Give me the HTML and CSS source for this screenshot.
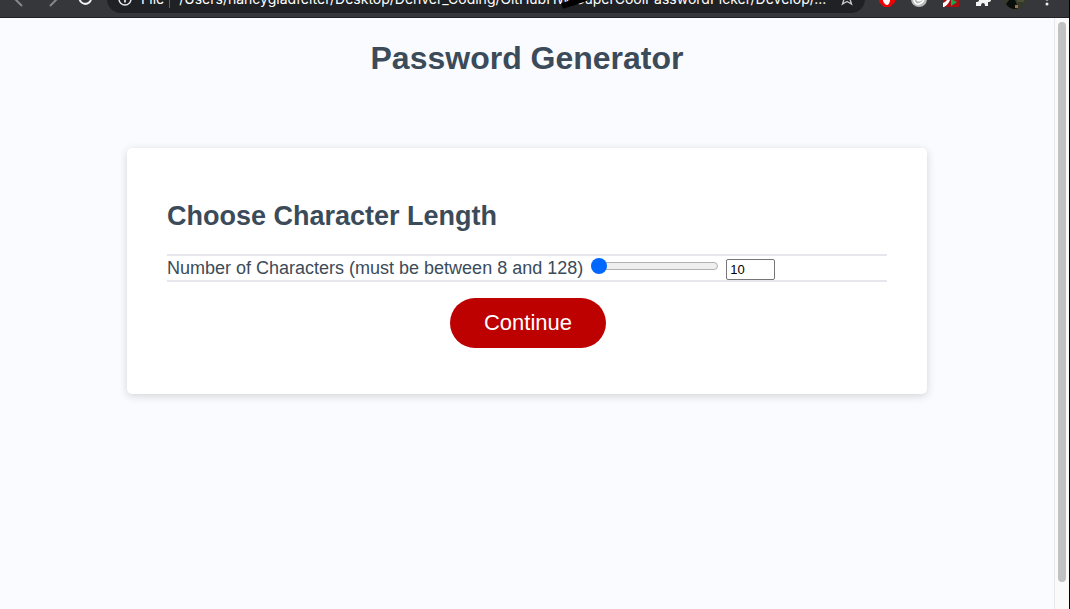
FILE: index.html
```html
<!DOCTYPE html>
<html lang="en">
<head>
  <meta charset="utf-8">
  <title>Password Generator</title>
  <link rel="stylesheet" href="styles.css">
</head>
<body>
  <div class="window">
    <header class="browser-bar">
      <div class="toolbar">
        <button class="tool back" aria-label="Back"><svg width="20" height="20" viewBox="0 0 20 20"><path d="M13 1 L4 8 L13 17" fill="none" stroke="#87888b" stroke-width="2"/></svg></button>
        <button class="tool forward" aria-label="Forward"><svg width="20" height="20" viewBox="0 0 20 20"><path d="M7 17 L16 8 L7 1" fill="none" stroke="#87888b" stroke-width="2"/></svg></button>
        <button class="tool reload" aria-label="Reload"><svg width="20" height="20" viewBox="0 0 20 20"><path d="M15 5 A6 6 0 1 0 16 11" fill="none" stroke="#f1f1f1" stroke-width="2"/><path d="M17 2v6h-6z" fill="#f1f1f1"/></svg></button>
        <div class="address">
          <svg class="info" width="16" height="16" viewBox="0 0 16 16"><circle cx="8" cy="8" r="6" fill="none" stroke="#e8eaed" stroke-width="1.500"/><path d="M8 7v4.500M8 4v1.500" stroke="#e8eaed" stroke-width="1.700"/></svg>
          <span class="scheme">File</span>
          <span class="path">/Users/nancygladfelter/Desktop/Denver_Coding/GitHubHW/SuperCoolPasswordPicker/Develop/...</span>
          <svg class="mark" width="36" height="16" viewBox="0 0 36 16"><path d="M1 13 L14 9 L25 5" fill="none" stroke="#000" stroke-width="6"/></svg>
          <svg class="star" width="16" height="16" viewBox="0 0 16 16"><path d="M8 0.500 L9.800 4.800 L14.500 5.200 L11 8.300 L12.500 13 L8 10.500 L3.500 13 L5 8.300 L1.500 5.200 L6.200 4.800Z" fill="none" stroke="#c4c7ca" stroke-width="1.400"/></svg>
        </div>
        <div class="extensions">
          <svg width="16" height="16" viewBox="0 0 16 16"><path d="M5 0h6l5 5v6l-5 5H5l-5-5V5z" fill="#f00000"/><path d="M4 3h7v7q-1 4-3 4t-4-4z" fill="#fff"/></svg>
          <svg width="16" height="16" viewBox="0 0 16 16"><circle cx="8" cy="8" r="8" fill="#b9b9b9"/><path d="M3 7v2q1 5 5 4 4-1 5-5" fill="none" stroke="#fff" stroke-width="1.500"/><path d="M6 8q1 3 5 0" fill="none" stroke="#fff" stroke-width="2"/></svg>
          <svg width="16" height="16" viewBox="0 0 16 16"><path d="M0 0h16v16H0z" fill="#a80d12"/><path d="M0 12Q5 10 7 3v6Q5 14 1 16H0z" fill="#fff"/><path d="M8 8l6 3-6 4z" fill="#19a652"/></svg>
          <svg width="16" height="16" viewBox="0 0 16 16"><path d="M3 3h3q0-3 2-3t2 3h4v4q2 0 2 2t-3 2v4h-3q0-3-2-3t-2 3H1v-4q3 0 3-2T1 7z" fill="#f4f4f4"/></svg>
          <svg class="avatar" width="22" height="22" viewBox="0 0 22 22"><circle cx="11" cy="11" r="11" fill="#343a2b"/><path d="M2 16q4-5 6-8l3 4 3 8q-7 3-12-4z" fill="#090d0b"/><path d="M11 17h3v3h-3z" fill="#9b7344"/><path d="M13 13h7" stroke="#65673e" stroke-width="1"/></svg>
          <svg class="more" width="4" height="16" viewBox="0 0 4 16"><circle cx="2" cy="2" r="1.500" fill="#f1f1f1"/><circle cx="2" cy="8" r="1.500" fill="#f1f1f1"/><circle cx="2" cy="13" r="1.500" fill="#f1f1f1"/></svg>
        </div>
      </div>
    </header>
    <div class="viewport">
      <main class="page">
        <h1 class="title">Password Generator</h1>
        <form class="card">
          <h2 class="card-title">Choose Character Length</h2>
          <div class="length-row">
            <label class="length-label" for="range">Number of Characters (must be between 8 and 128)</label>
            <input class="length-range" id="range" type="range" min="8" max="128" value="10">
            <input class="length-number" type="text" inputmode="numeric" value="10" aria-label="Number of characters">
          </div>
          <div class="card-footer"><button class="continue" type="button">Continue</button></div>
        </form>
      </main>
      <div class="scrollbar"><div class="thumb"></div></div>
    </div>
  </div>
</body>
</html>
```
FILE: styles.css
```css
* { box-sizing: border-box; }

body {
  margin: 0;
  background: #fafbff;
  color: #3b4b59;
  font-family: "Liberation Sans", Arial, sans-serif;
}

.window {
  display: flex;
  flex-direction: column;
  min-height: 100vh;
  border-right: 1px solid #000;
}

.browser-bar {
  display: flex;
  align-items: flex-end;
  height: 18px;
  overflow: hidden;
  background: #36373b;
  border-bottom: 1px solid #202124;
}

.toolbar {
  display: flex;
  flex: 1;
  align-items: center;
  min-width: 0;
  padding: 0 20px 4px 9px;
}

.tool {
  display: flex;
  padding: 0;
  border: 0;
  background: none;
}

.forward { margin-left: 14px; }
.reload { margin-left: 12px; }

.address {
  display: flex;
  flex: 1;
  align-items: center;
  position: relative;
  min-width: 0;
  height: 28px;
  margin-left: 12px;
  padding: 0 10px;
  border-radius: 14px;
  background: #202124;
  color: #fff;
  font: 14px/18px Inter, sans-serif;
}

.info, .star { flex: none; }

.scheme {
  margin-left: 8px;
  padding-right: 5px;
  border-right: 1px solid #5f6368;
}

.path {
  flex: 1;
  min-width: 0;
  margin-left: 9px;
  overflow: hidden;
  white-space: nowrap;
}

.mark {
  position: absolute;
  left: 454px;
  bottom: 4px;
}

.extensions {
  display: flex;
  flex: none;
  align-items: center;
  gap: 16px;
  margin-left: 14px;
}

.avatar { margin-left: -3px; }
.more { margin-left: 3px; }

.viewport {
  display: flex;
  flex: 1;
}

.page {
  flex: 1;
  min-width: 0;
}

.title {
  margin: 21px 0 71px;
  font-size: 32px;
  line-height: 38px;
  text-align: center;
}

.card {
  max-width: 800px;
  margin: 0 auto;
  padding: 50px 40px 46px;
  border-radius: 5px;
  background: #fff;
  box-shadow: 0 2px 8px rgba(0, 0, 0, 0.16);
}

.card-title {
  margin: 0 0 20px;
  font-size: 27px;
  line-height: 36px;
}

.length-row {
  display: flex;
  align-items: center;
  border-top: 2px solid #e7e6ec;
  border-bottom: 2px solid #e7e6ec;
  font-size: 18px;
  line-height: 24px;
}

.length-range {
  appearance: none;
  width: 127px;
  height: 16px;
  margin: 0 0 4px 8px;
  background: none;
}

.length-range::-webkit-slider-runnable-track {
  height: 8px;
  border: 1px solid #b2b2b2;
  border-radius: 4px;
  background: #efefef;
}

.length-range::-webkit-slider-thumb {
  appearance: none;
  width: 16px;
  height: 16px;
  margin: -5px 0 0 -3px;
  border-radius: 50%;
  background: #0068ff;
}

.length-number {
  align-self: flex-end;
  width: 49px;
  height: 21px;
  margin: 0 0 0 8px;
  padding: 1px 3px;
  border: 1px solid #767676;
  border-radius: 2px;
  background: #fff;
  color: #000;
  font: 13px "Liberation Sans", Arial, sans-serif;
}

.card-footer {
  display: flex;
  justify-content: center;
  margin-top: 16px;
  padding-left: 2px;
}

.continue {
  padding: 12px 34px;
  border: 0;
  border-radius: 25px;
  background: #bd0000;
  color: #fff;
  font: 22px/26px "Liberation Sans", Arial, sans-serif;
}

.scrollbar {
  width: 15px;
  padding: 4px 3px 27px 3px;
  border-left: 1px solid #e8e8e8;
  background: #fafafa;
}

.thumb {
  width: 8px;
  height: 100%;
  border-radius: 4px;
  background: #c1c1c1;
}
```
